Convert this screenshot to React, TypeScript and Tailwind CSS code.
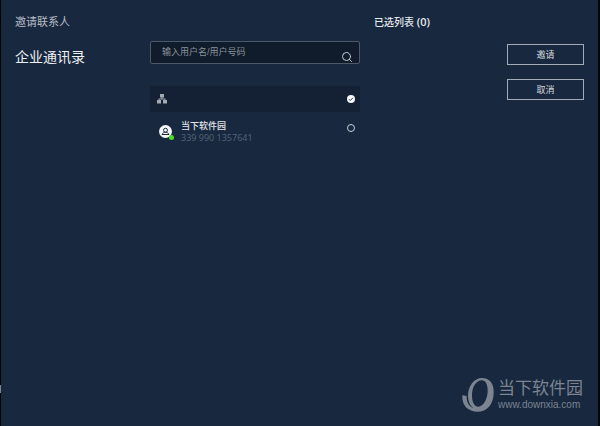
import { Search } from "lucide-react"

const contacts = [{ id: "1", name: "当下软件园", number: "339 990 1357641" }]

function OrgIcon() {
  return (
    <svg viewBox="0 0 20 20" className="h-[10px] w-[10px] fill-[#a3a9b2]" aria-hidden="true">
      <path d="M6 0h8v7H6zM9 7h2v4H9zM3 9h14v2H3zM3 10h2v3H3zM15 10h2v3h-2zM0 12h8v7H0zM12 12h8v7h-8z" />
    </svg>
  )
}

function Avatar() {
  return (
    <span className="relative h-[14px] w-[14px] shrink-0">
      <svg viewBox="0 0 28 28" className="h-[14px] w-[14px]" aria-hidden="true">
        <circle cx="13" cy="13" r="13" fill="#f4f6f8" />
        <circle cx="13" cy="10.5" r="4" fill="none" stroke="#1c2a3f" strokeWidth="2" />
        <path d="M6 19c2-4 4-4.500 7-4.500s5 .5 7 4.500z" fill="none" stroke="#1c2a3f" strokeWidth="2" />
      </svg>
      <span className="absolute -right-px -bottom-px h-[5px] w-[5px] rounded-full bg-[#4be11c]" />
    </span>
  )
}

function ContactList() {
  return (
    <section>
      <label className="flex h-[23px] items-center rounded-[2px] border border-[#4c5866] bg-[#101b2b] pr-[6px] pl-[11px]">
        <input
          type="text"
          aria-label="输入用户名/用户号码"
          placeholder="输入用户名/用户号码"
          className="min-w-0 flex-1 bg-transparent pt-px text-[9px] text-white outline-none placeholder:text-[#8b929c]"
        />
        <Search className="mt-2 h-3 w-3 text-[#c3c8cf]" strokeWidth={2} />
      </label>

      <label className="mt-[22px] flex h-[26px] items-center justify-between bg-[#142033] pr-[5px] pl-[7px]">
        <OrgIcon />
        <input type="checkbox" aria-label="全选" defaultChecked className="peer sr-only" />
        <svg viewBox="0 0 16 16" className="h-2 w-2" aria-hidden="true">
          <circle cx="8" cy="8" r="8" fill="#f4f6f8" />
          <path d="M4 8.500l2.500 2.500L12 5.500" fill="none" stroke="#2a374a" strokeWidth="2" />
        </svg>
      </label>

      <ul className="mt-2">
        {contacts.map((c) => (
          <li key={c.id}>
            <label className="flex items-start pr-[5px] pl-[9px]">
              <span className="mt-[5px] flex">
                <Avatar />
              </span>
              <span className="ml-2 flex-1">
                <span className="block text-[9px] leading-3 font-medium text-[#e3e6ea]">{c.name}</span>
                <span className="block font-['Noto_Sans'] text-[9px] leading-3 text-[#536174]">{c.number}</span>
              </span>
              <input
                type="checkbox"
                aria-label={c.name}
                className="mt-1 h-2 w-2 appearance-none rounded-full border border-[#c9cfd7] checked:bg-white"
              />
            </label>
          </li>
        ))}
      </ul>
    </section>
  )
}

function Watermark() {
  return (
    <footer className="flex items-center justify-end gap-1 pr-[15px] pb-[14px] text-[#7b8490]">
      <svg viewBox="0 0 96 102" className="h-[34px] w-8" aria-hidden="true">
        <path
          fill="currentColor"
          fillRule="evenodd"
          d="M60 0C84 0 96 18 95 44C94 79 76 101 46 101C18 101 -1 82 1 52L14 54C13 70 20 84 34 90C23 82 18 70 18 54C18 24 36 0 60 0ZM58 7C41 9 30 28 30 53C30 73 38 86 49 86C64 85 77 62 77 38C77 18 70 6 58 7Z"
        />
      </svg>
      <div>
        <div className="text-[17px] leading-5">当下软件园</div>
        <div className="text-[10px] leading-3">www.downxia.com</div>
      </div>
    </footer>
  )
}

export default function App() {
  return (
    <div className="relative flex min-h-screen flex-col border-r-2 border-l border-black border-r-[#03070c] bg-[#17283f] font-['Liberation_Sans','Noto_Sans_CJK_SC',sans-serif] text-white">
      <span className="absolute top-[385px] -left-px h-2 w-px bg-[#7d838b]" />

      <main className="grid flex-1 grid-cols-[135fr_210fr_224fr] px-[14px]">
        <aside className="pt-4">
          <h1 className="text-[11px] leading-3 text-[#b7bdc6]">邀请联系人</h1>
          <h2 className="mt-[19px] text-sm leading-5 text-[#eef0f3]">企业通讯录</h2>
        </aside>

        <div className="pt-[41px]">
          <ContactList />
        </div>

        <section className="flex flex-col pt-4 pl-[14px]">
          <h2 className="text-[10px] leading-3 font-medium text-[#e6e9ed]">
            已选列表 <span className="font-['Open_Sans'] text-[11px] font-semibold">(0)</span>
          </h2>
          <div className="mt-[15px] flex flex-col items-end gap-[14px]">
            <button type="button" className="h-[21px] w-[77px] border border-[#a4abb6] text-[9px] leading-3 text-[#d5d9df]">
              邀请
            </button>
            <button type="button" className="h-[21px] w-[77px] border border-[#a4abb6] text-[9px] leading-3 text-[#d5d9df]">
              取消
            </button>
          </div>
        </section>
      </main>

      <Watermark />
    </div>
  )
}
